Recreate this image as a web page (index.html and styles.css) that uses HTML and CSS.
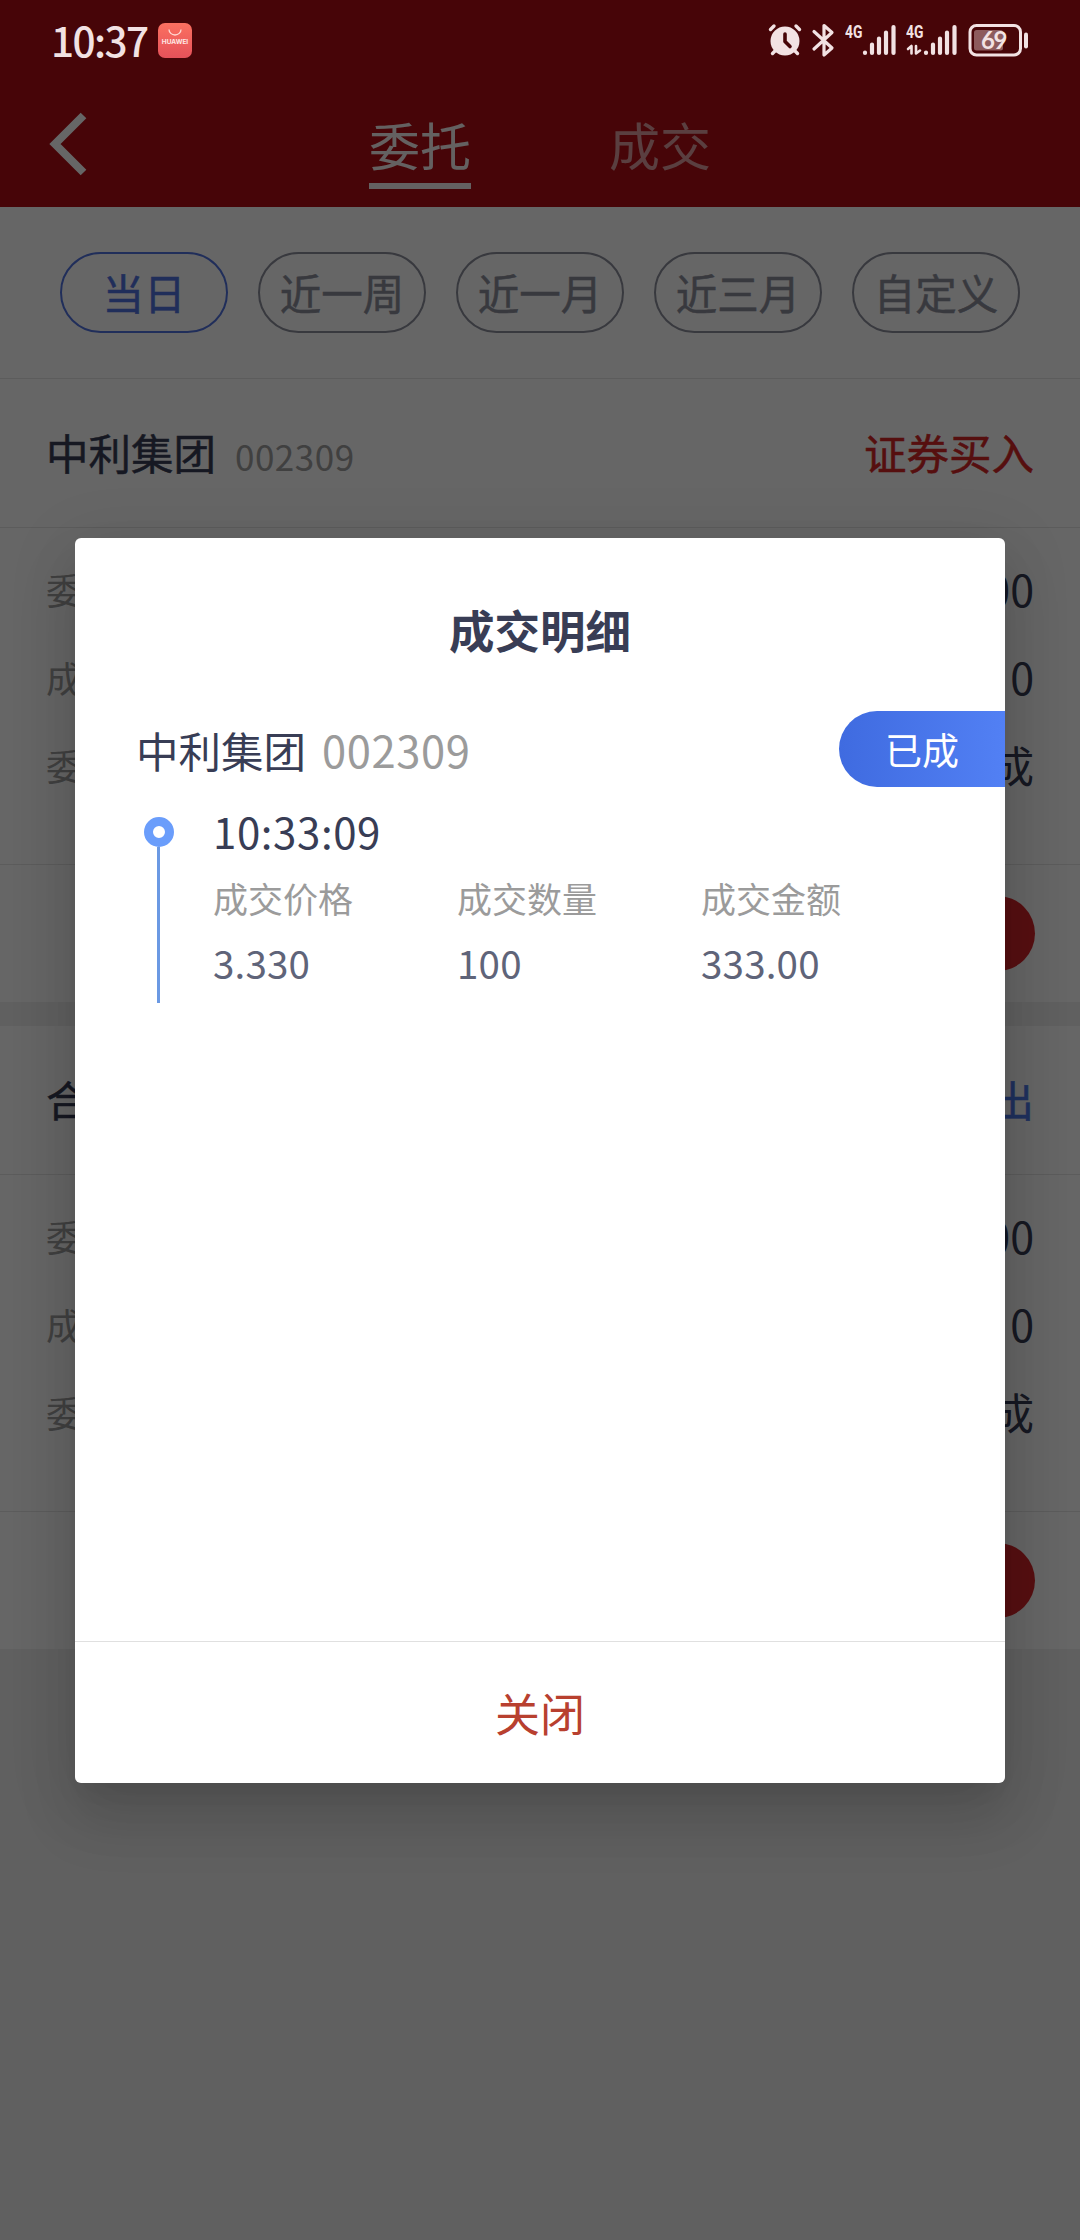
FILE: index.html
```html
<!DOCTYPE html>
<html lang="zh-CN">
  <head>
    <meta charset="UTF-8" />
    <meta name="viewport" content="width=device-width, initial-scale=1.0" />
    <title>委托</title>
    <link rel="stylesheet" href="styles.css">
  </head>
  <body>
    <div class="header">
      <div class="status-bar">
        <span class="clock">10:37</span>
        <div class="app-icon">
          <svg width="14" height="7" viewBox="0 0 14 7" fill="none" stroke="#ffd9d2" stroke-width="1.3">
            <path d="M1 0.5a6 5.5 0 0 0 12 0" />
          </svg>
          <span>HUAWEI</span>
        </div>
        <div class="status-icons">
          <svg width="264" height="36" viewBox="0 0 264 36" fill="none" stroke="#f2e2e3" stroke-linecap="round" stroke-linejoin="round">
            <!-- alarm -->
            <circle cx="17" cy="18" r="14.5" fill="#f2e2e3" stroke="none" />
            <path d="M2.500 6.500l3.500-3.500M31.500 6.500l-3.500-3.500M4.500 30.500l3-3M29.500 30.500l-3-3" stroke-width="3.4" />
            <path d="M17 11v7.500l5 5" stroke="#470508" stroke-width="3.600" />
            <!-- bluetooth -->
            <path d="M46 8.500l18 16.500-8 7V2.500l8 7L46 26" stroke-width="3.2" />
            <!-- sim 1 -->
            <path d="M97 29.500v0.500M104 21.500v8.500M111 15.500v14.500M118 9.500v20.500M125.500 4v26" stroke-width="4.200" />
            <!-- sim 2 -->
            <path d="M158 29.500v0.500M165 21.500v8.500M172 15.500v14.500M179 9.500v20.500M186.500 4v26" stroke-width="4.200" />
            <path d="M140 26l3.500-3v7.500M148 23v7.500l4-3" stroke-width="2.600" />
            <!-- battery -->
            <rect x="206" y="7" width="29" height="20.500" rx="2.500" fill="#8d5b5d" stroke="none" />
            <rect x="202" y="2.500" width="50.500" height="29.500" rx="6.500" stroke-width="3" />
            <path d="M258 11.500v12" stroke-width="4" />
          </svg>
          <span class="net net1">4G</span>
          <span class="net net2">4G</span>
          <span class="percent">69</span>
        </div>
      </div>
      <div class="nav">
        <svg class="back" width="40" height="64" viewBox="0 0 40 64" fill="none" stroke="#fff" stroke-width="8">
          <path d="M35.500 3.500L7 32l28.500 28.500" />
        </svg>
        <div class="tabs">
          <span class="tab active">委托</span>
          <span class="tab">成交</span>
        </div>
      </div>
    </div>

    <div class="filters">
      <span class="pill active">当日</span>
      <span class="pill">近一周</span>
      <span class="pill">近一月</span>
      <span class="pill">近三月</span>
      <span class="pill">自定义</span>
    </div>

    <div class="card">
      <div class="card-header">
        <span class="stock">中利集团</span>
        <span class="code">002309</span>
        <span class="side buy">证券买入</span>
      </div>
      <div class="card-body">
        <div class="row"><label>委</label><span>00</span></div>
        <div class="row"><label>成</label><span>0</span></div>
        <div class="row"><label>委</label><span>成</span></div>
      </div>
      <div class="card-footer"><div class="btn-detail"></div></div>
    </div>

    <div class="card">
      <div class="card-header">
        <span class="stock">合</span>
        <span class="side sell">出</span>
      </div>
      <div class="card-body">
        <div class="row"><label>委</label><span>00</span></div>
        <div class="row"><label>成</label><span>0</span></div>
        <div class="row"><label>委</label><span>成</span></div>
      </div>
      <div class="card-footer"><div class="btn-detail"></div></div>
    </div>

    <div class="overlay">
      <div class="dialog">
        <h2>成交明细</h2>
        <div class="dialog-stock">
          <span class="name">中利集团</span>
          <span class="num">002309</span>
          <span class="badge">已成</span>
        </div>
        <div class="timeline">
          <div class="marker">
            <i class="dot"></i>
            <i class="line"></i>
          </div>
          <div class="deal">
            <div class="time">10:33:09</div>
            <div class="cols">
              <div><label>成交价格</label><p>3.330</p></div>
              <div><label>成交数量</label><p>100</p></div>
              <div><label>成交金额</label><p>333.00</p></div>
            </div>
          </div>
        </div>
        <div class="close">关闭</div>
      </div>
    </div>
  </body>
</html>
```
FILE: styles.css
```css
* {
  margin: 0;
  padding: 0;
  box-sizing: border-box;
}

body {
  width: 1080px;
  height: 2240px;
  overflow: hidden;
  position: relative;
  background-color: #f0f0f0;
  font-family: "Noto Sans CJK SC", sans-serif;
  color: #383d55;
}

/* header */
.header {
  height: 207px;
  background-color: #b20d14;
}

.status-bar {
  height: 84px;
  padding: 0 51px;
  display: flex;
  align-items: center;
  position: relative;
  z-index: 2;
}

.clock {
  width: 107px;
  padding-bottom: 4px;
  font-size: 40.5px;
  font-weight: 500;
  line-height: 80px;
  letter-spacing: -1.6px;
  color: #f2e2e3;
}

.app-icon {
  width: 34px;
  height: 35px;
  margin-top: -3px;
  border-radius: 7px;
  background: linear-gradient(#fb7060, #e5525a);
  display: flex;
  flex-direction: column;
  align-items: center;
  padding-top: 6px;
}

.app-icon span {
  margin-top: 2px;
  font: bold 6.5px/8px Inter, sans-serif;
  color: #ffe9e6;
}

.status-icons {
  position: relative;
  width: 264px;
  height: 36px;
  margin: -2px -3px 0 auto;
  color: #f2e2e3;
}

.status-icons svg {
  display: block;
}

/* labels drawn over the signal and battery icons */
.net {
  position: absolute;
  top: -3px;
  font: bold 18px/24px Roboto, sans-serif;
  transform: scaleX(0.77);
  transform-origin: left;
}

.net1 {
  left: 77px;
}

.net2 {
  left: 138px;
}

.percent {
  position: absolute;
  left: 213px;
  top: 2px;
  font: bold 24px/30px Lato, sans-serif;
  letter-spacing: -1.5px;
}

.nav {
  height: 123px;
  display: flex;
  padding-left: 48px;
}

.back {
  margin-top: 28px;
}

.tabs {
  display: flex;
  gap: 138px;
  margin-left: 281px;
}

.tab {
  width: 102px;
  height: 105px;
  padding-top: 23px;
  font-size: 51px;
  line-height: 74px;
  color: #fff;
  opacity: 0.6;
}

.tab.active {
  border-bottom: 6px solid #fff;
  opacity: 0.95;
}

/* filters */
.filters {
  height: 172px;
  padding: 45px 60px 0;
  display: flex;
  gap: 30px;
  background-color: #fff;
  border-bottom: 1px solid #e5e5e5;
}

.pill {
  width: 168px;
  height: 81px;
  border: 2px solid #8c8e9c;
  border-radius: 41px;
  font-size: 41.5px;
  line-height: 77px;
  text-align: center;
  color: #8c8e9c;
  -webkit-text-stroke: 0.5px;
}

.pill.active {
  color: #5273e1;
  border-color: #5273e1;
}

/* orders */
.card {
  height: 623px;
  margin-bottom: 24px;
  background-color: #fff;
}

.card-header {
  height: 149px;
  padding: 0 46px 3px;
  display: flex;
  align-items: center;
  border-bottom: 1px solid #e5e5e5;
}

.stock {
  font-size: 42.5px;
  -webkit-text-stroke: 0.5px;
}

.code {
  margin: 8px 0 0 19px;
  font-size: 35px;
  letter-spacing: 0.5px;
  color: #a0a0a0;
}

.side {
  margin-left: auto;
  font-size: 42.5px;
  -webkit-text-stroke: 0.5px;
}

.buy {
  color: #d72626;
}

.sell {
  color: #4e7aeb;
}

.card-body {
  height: 337px;
  padding: 17px 46px 0;
  border-bottom: 1px solid #e5e5e5;
}

.row {
  height: 88px;
  display: flex;
  align-items: center;
  justify-content: space-between;
}

.row label {
  font-size: 36px;
  color: #a0a0a0;
}

.row span {
  margin-top: -3px;
  font-size: 43px;
}

.card-footer {
  height: 137px;
  padding: 31px 45px 0;
}

.btn-detail {
  width: 180px;
  height: 75px;
  margin-left: auto;
  border-radius: 38px;
  background-color: #d9272c;
}

/* dialog */
.overlay {
  position: absolute;
  inset: 0;
  padding: 538px 75px 0;
  background-color: rgba(0, 0, 0, 0.6);
}

.dialog {
  height: 1245px;
  display: flex;
  flex-direction: column;
  background-color: #fff;
  border-radius: 6px;
  box-shadow: 0 16px 22px -10px rgba(0, 0, 0, 0.05),
    0 36px 57px 4px rgba(0, 0, 0, 0.11), 0 12px 66px 8px rgba(0, 0, 0, 0.09);
}

.dialog h2 {
  margin-top: 55px;
  font-size: 45.5px;
  line-height: 72px;
  text-align: center;
}

.dialog-stock {
  height: 76px;
  margin-top: 46px;
  padding-left: 61px;
  display: flex;
  align-items: center;
}

.name {
  font-size: 42.5px;
}

.num {
  margin-left: 16px;
  font-size: 43.5px;
  letter-spacing: 0.6px;
  color: #9b9b9b;
}

.badge {
  width: 166px;
  height: 76px;
  margin-left: auto;
  border-radius: 38px 0 0 38px;
  background: linear-gradient(90deg, #3f6be0, #5280f4);
  font-size: 37px;
  line-height: 76px;
  text-align: center;
  color: #fff;
}

.timeline {
  flex: 1;
  display: flex;
  padding: 20px 0 0 69px;
}

.marker {
  width: 30px;
  height: 196px;
  padding-top: 10px;
  display: flex;
  flex-direction: column;
  align-items: center;
}

.dot {
  width: 30px;
  height: 30px;
  border: 9px solid #6a9dfb;
  border-radius: 50%;
}

.line {
  flex: 1;
  width: 3px;
  margin-right: 1px;
  background-color: #6b99e3;
}

.deal {
  margin-left: 39px;
}

.time {
  font-size: 42px;
  line-height: 48px;
  margin-bottom: 2px;
  letter-spacing: 0.6px;
}

.cols {
  display: grid;
  grid-template-columns: repeat(3, 244px);
}

.cols label {
  display: block;
  margin-top: 15px;
  font-size: 35px;
  line-height: 52px;
  color: #9b9b9b;
}

.cols p {
  margin-top: 12px;
  font-size: 38.5px;
  line-height: 52px;
  letter-spacing: 0.2px;
  color: #5f6479;
}

.close {
  height: 142px;
  border-top: 1px solid #e0e0e0;
  font-size: 45px;
  line-height: 142px;
  text-align: center;
  color: #b8402f;
}
```
